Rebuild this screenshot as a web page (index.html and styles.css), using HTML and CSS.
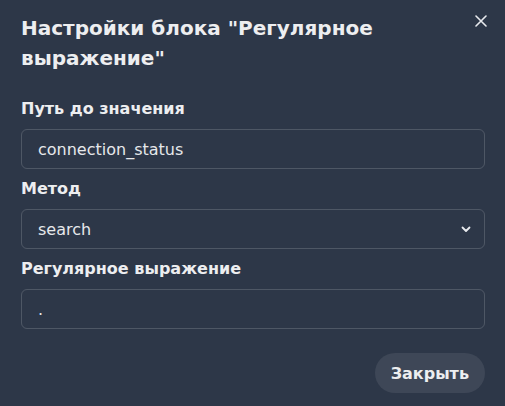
FILE: index.html
```html
<!DOCTYPE html>
<html lang="ru">
<head>
<meta charset="utf-8">
<link rel="stylesheet" href="styles.css">
</head>
<body>
<div class="modal">
  <header class="modal-header">
    <h2 class="title">Настройки блока "Регулярное выражение"</h2>
    <button class="close" aria-label="Close">
      <svg width="12" height="12" viewBox="0 0 12 12"><path d="M1 1L11 11M11 1L1 11" stroke="#e8eaee" stroke-width="1.6" stroke-linecap="round"/></svg>
    </button>
  </header>
  <div class="modal-body">
    <div class="field">
      <label class="label">Путь до значения</label>
      <div class="input">connection_status</div>
    </div>
    <div class="field">
      <label class="label">Метод</label>
      <div class="input select">
        <span>search</span>
        <svg class="chev" width="12" height="12" viewBox="0 0 12 12"><path d="M2.5 4.5L6 8L9.5 4.5" fill="none" stroke="#e8eaee" stroke-width="1.8" stroke-linecap="round" stroke-linejoin="round"/></svg>
      </div>
    </div>
    <div class="field">
      <label class="label">Регулярное выражение</label>
      <div class="input">.</div>
    </div>
  </div>
  <footer class="modal-footer">
    <button class="btn">Закрыть</button>
  </footer>
</div>
</body>
</html>
```

FILE: styles.css
```css
html, body {
  margin: 0;
  padding: 0;
  overflow: hidden;
  background: #2d3748;
}
.modal {
  width: 505px;
  height: 406px;
  background: #2d3748;
  color: rgba(255,255,255,0.92);
  font-family: "DejaVu Sans", sans-serif;
  position: relative;
}
.modal-header {
  padding: 13px 60px 16px 21px;
}
.title {
  margin: 0;
  font-size: 20px;
  line-height: 30px;
  font-weight: 700;
  color: #edeef0;
}
.close {
  position: absolute;
  top: 5px;
  right: 8px;
  width: 32px;
  height: 32px;
  border: 0;
  background: transparent;
  display: flex;
  align-items: center;
  justify-content: center;
  padding: 0;
}
.modal-body {
  padding: 8px 20px 8px 21px;
  display: flex;
  flex-direction: column;
}
.field {
  display: flex;
  flex-direction: column;
}
.label {
  font-size: 16px;
  line-height: 24px;
  font-weight: 700;
  margin-bottom: 8px;
  color: #edeef0;
}
.input {
  height: 38px;
  border: 1px solid rgba(255,255,255,0.16);
  border-radius: 6px;
  padding: 0 16px;
  display: flex;
  align-items: center;
  font-size: 16px;
  color: #e6e8eb;
  margin-bottom: 8px;
}
.field:last-child .input {
  margin-bottom: 0;
}
.select {
  justify-content: space-between;
  padding-right: 12px;
}
.chev {
  display: block;
}
.modal-footer {
  display: flex;
  justify-content: flex-end;
  padding: 16px 20px 13px 21px;
}
.btn {
  height: 40px;
  padding: 0 16px;
  border: 0;
  border-radius: 20px;
  background: #3e4757;
  color: #edeef0;
  font-family: "DejaVu Sans", sans-serif;
  font-size: 16px;
  font-weight: 700;
}
```
